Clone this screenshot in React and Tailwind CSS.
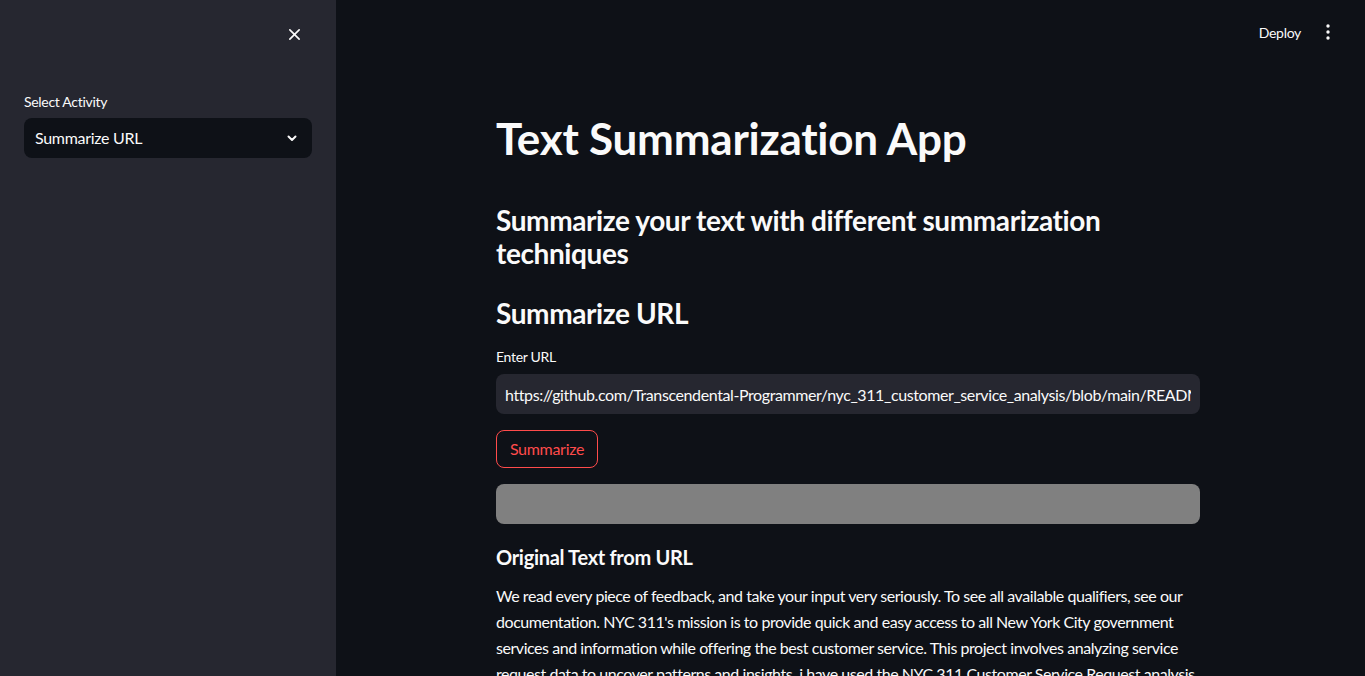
import React from "react";

export default function App() {
  return (
    <div className="flex h-[676px] w-[1365px] overflow-hidden bg-[#0e1117] text-[#fafafa]" style={{ fontFamily: "Lato, 'Noto Sans', sans-serif" }}>
      <aside className="flex w-[336px] shrink-0 flex-col bg-[#262730] px-6">
        <div className="flex h-[68px] shrink-0 items-center justify-end pr-[11px]">
          <svg width="13" height="13" viewBox="0 0 14 14" fill="none" stroke="#fafafa" strokeWidth="1.8" strokeLinecap="round">
            <path d="M2 2l10 10M12 2L2 12" />
          </svg>
        </div>
        <div className="mt-[25px] text-[14px] leading-[18px] tracking-[-0.3px]">Select Activity</div>
        <div className="mt-[7px] flex h-[40px] items-center justify-between rounded-lg bg-[#0e1117] pl-[11px] pr-[14px]">
          <span className="text-[16px] tracking-[-0.3px]">Summarize URL</span>
          <svg width="12" height="12" viewBox="0 0 12 12" fill="none" stroke="#fafafa" strokeWidth="2" strokeLinecap="round" strokeLinejoin="round">
            <path d="M2.5 4.5L6 8l3.5-3.5" />
          </svg>
        </div>
      </aside>
      <main className="flex min-h-0 flex-1 flex-col overflow-hidden">
        <header className="flex h-[64px] shrink-0 items-center justify-end gap-[25px] pr-[35px]">
          <span className="text-[14px] tracking-[-0.3px]">Deploy</span>
          <svg width="4" height="16" viewBox="0 0 4 16" fill="#fafafa">
            <circle cx="2" cy="2" r="1.7" />
            <circle cx="2" cy="8" r="1.7" />
            <circle cx="2" cy="14" r="1.7" />
          </svg>
        </header>
        <div className="flex w-[704px] shrink-0 flex-col" style={{ marginLeft: 160 }}>
          <h1 className="mt-[44px] text-[44px] font-bold leading-[60px] tracking-[-0.25px]">Text Summarization App</h1>
          <h2 className="mt-[36px] text-[28px] font-bold leading-[33px] tracking-[-0.4px]">Summarize your text with different summarization techniques</h2>
          <h3 className="mt-[23px] text-[28px] font-bold leading-[40px] tracking-[-0.4px]">Summarize URL</h3>
          <label className="mt-[15px] text-[14px] leading-[18px] tracking-[-0.3px]">Enter URL</label>
          <input
            readOnly
            value="https://github.com/Transcendental-Programmer/nyc_311_customer_service_analysis/blob/main/README.md"
            className="mt-[8px] h-[40px] w-full rounded-lg bg-[#262730] px-[9px] text-[16px] tracking-[-0.4px] text-[#fafafa] outline-none"
            style={{ fontFamily: "Lato, 'Noto Sans', sans-serif" }}
          />
          <button className="mt-[16px] flex h-[38px] w-[102px] items-center justify-center rounded-lg border border-[#ff4b4b] text-[16px] tracking-[-0.3px] text-[#ff4b4b]">Summarize</button>
          <div className="mt-[16px] h-[40px] rounded-lg bg-[#808080]" />
          <h4 className="mt-[19px] text-[20px] font-bold leading-[28px] tracking-[-0.3px]">Original Text from URL</h4>
          <p className="mt-[12px] text-[16px] leading-[26px] tracking-[-0.45px]">
            We read every piece of feedback, and take your input very seriously. To see all available qualifiers, see our documentation. NYC 311's mission is to provide quick and easy access to all New York City government services and information while offering the best customer service. This project involves analyzing service request data to uncover patterns and insights. i have used the NYC 311 Customer Service Request analysis
          </p>
        </div>
      </main>
    </div>
  );
}
